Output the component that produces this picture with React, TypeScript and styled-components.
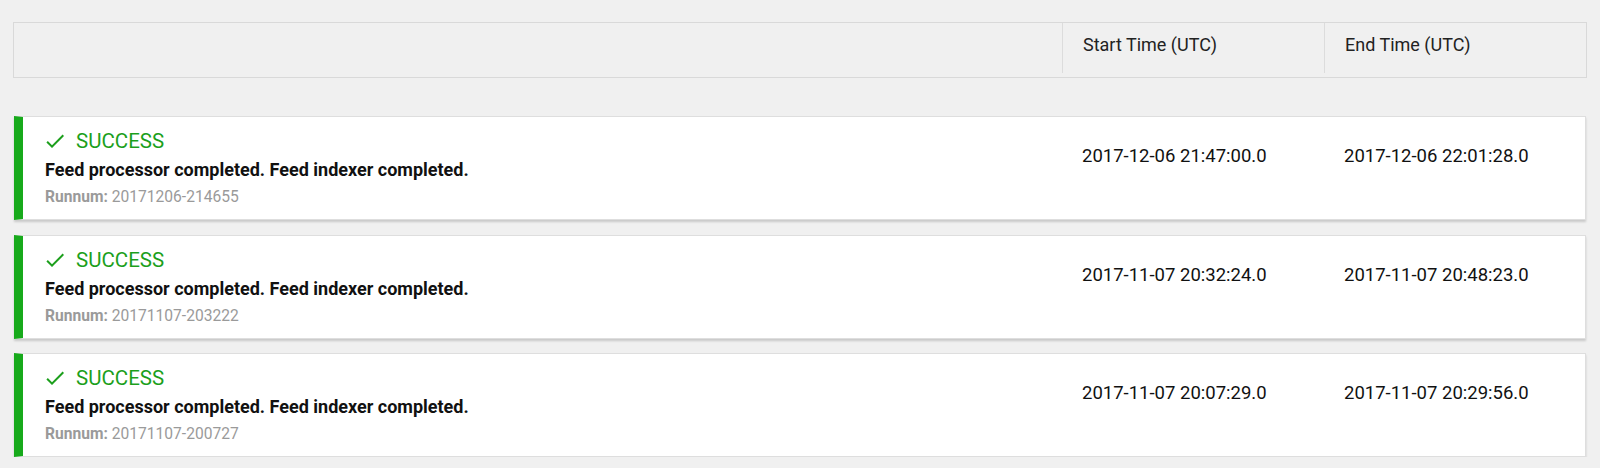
import React from "react";
import styled, { createGlobalStyle } from "styled-components";

const GlobalStyle = createGlobalStyle`
  html, body {
    margin: 0;
    padding: 0;
    background: #f0f0f0;
    font-family: Roboto, "Liberation Sans", Arial, sans-serif;
  }
`;

const Page = styled.div`
  padding: 22px 13px 0 13px;
`;

const Header = styled.div`
  display: grid;
  grid-template-columns: 1fr 262px 262px;
  border: 1px solid #d9d9d9;
  padding-bottom: 4px;
  margin-bottom: 38px;
`;

const HeaderCell = styled.div<{ $divider?: boolean }>`
  height: 50px;
  box-sizing: border-box;
  padding: 10px 20px 0 20px;
  font-size: 18px;
  line-height: 24px;
  color: #222;
  border-left: ${(p) => (p.$divider ? "1px solid #dcdcdc" : "none")};
`;

const List = styled.div`
  display: flex;
  flex-direction: column;
  gap: 14.5px;
`;

const Card = styled.div`
  display: grid;
  grid-template-columns: 1fr 262px 261px;
  margin: 0 1px;
  background: #fff;
  border: 1px solid #dedede;
  border-left: 9px solid #17aa1b;
  box-shadow: 0 2px 2px rgba(0, 0, 0, 0.16);
  height: 104px;
  box-sizing: border-box;
`;

const Main = styled.div`
  padding: 12px 0 0 22px;
`;

const Status = styled.div`
  display: flex;
  align-items: center;
  gap: 9px;
  margin-left: -2px;
  font-size: 20.5px;
  line-height: 24px;
  color: #1c9f1c;
  svg {
    display: block;
  }
`;

const Message = styled.div`
  margin-top: 5px;
  font-size: 18px;
  font-weight: 700;
  line-height: 24px;
  color: #111;
`;

const Runnum = styled.div`
  margin-top: 5px;
  font-size: 15.6px;
  line-height: 20px;
  color: #9a9a9a;
  b {
    font-weight: 700;
  }
`;

const TimeCell = styled.div`
  padding: 27px 20px 0 20px;
  font-size: 18.5px;
  line-height: 24px;
  color: #111;
`;

const CheckIcon = () => (
  <svg width="24" height="24" viewBox="0 0 24 24" fill="#1c9f1c">
    <path d="M9 16.17L4.83 12l-1.42 1.41L9 19 21 7l-1.41-1.41z" />
  </svg>
);

const runs = [
  { runnum: "20171206-214655", start: "2017-12-06 21:47:00.0", end: "2017-12-06 22:01:28.0" },
  { runnum: "20171107-203222", start: "2017-11-07 20:32:24.0", end: "2017-11-07 20:48:23.0" },
  { runnum: "20171107-200727", start: "2017-11-07 20:07:29.0", end: "2017-11-07 20:29:56.0" },
];

export default function App() {
  return (
    <Page>
      <GlobalStyle />
      <Header>
        <HeaderCell />
        <HeaderCell $divider>Start Time (UTC)</HeaderCell>
        <HeaderCell $divider>End Time (UTC)</HeaderCell>
      </Header>
      <List>
        {runs.map((r) => (
          <Card key={r.runnum}>
            <Main>
              <Status>
                <CheckIcon />
                SUCCESS
              </Status>
              <Message>Feed processor completed. Feed indexer completed.</Message>
              <Runnum>
                <b>Runnum:</b> {r.runnum}
              </Runnum>
            </Main>
            <TimeCell>{r.start}</TimeCell>
            <TimeCell>{r.end}</TimeCell>
          </Card>
        ))}
      </List>
    </Page>
  );
}
